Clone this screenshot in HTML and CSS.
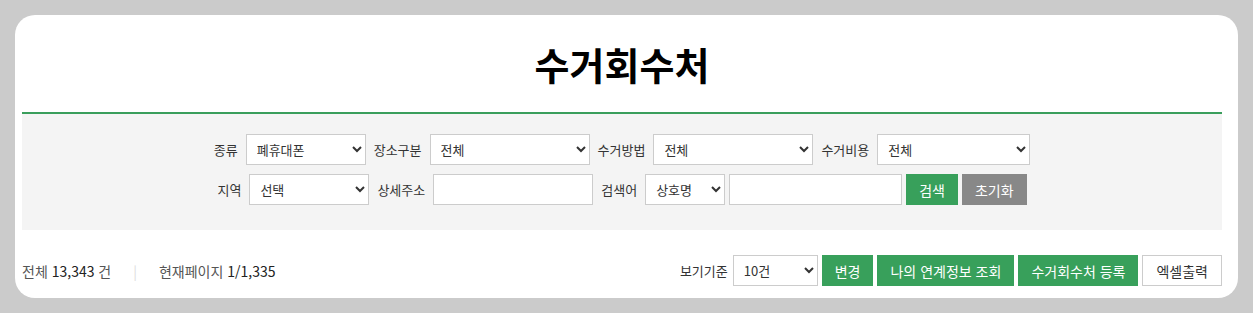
FILE: index.html
```html
<!DOCTYPE html>
<html lang="ko">
<head>
    <meta charset="UTF-8">
    <meta name="viewport" content="width=device-width, initial-scale=1.0">
    <title>수거회수처</title>
    <link rel="stylesheet" href="styles.css">
</head>
<body>
    <div class="card">
        <h1 class="page-title">수거회수처</h1>

        <!-- search filter -->
        <div class="filter">
            <div class="filter-row">
                <label>종류</label>
                <select class="w120"><option>폐휴대폰</option></select>
                <label>장소구분</label>
                <select class="w160"><option>전체</option></select>
                <label>수거방법</label>
                <select class="w160"><option>전체</option></select>
                <label>수거비용</label>
                <select class="w153"><option>전체</option></select>
            </div>
            <div class="filter-row">
                <label>지역</label>
                <select class="w120"><option>선택</option></select>
                <label>상세주소</label>
                <input type="text" class="w160">
                <label>검색어</label>
                <div class="group">
                    <select class="w80"><option>상호명</option></select>
                    <input type="text" class="w173">
                    <button class="btn green">검색</button>
                    <button class="btn gray">초기화</button>
                </div>
            </div>
        </div>

        <!-- list info -->
        <div class="list-bar">
            <div class="count">
                <span>전체 <b>13,343</b> 건</span>
                <span class="sep">|</span>
                <span>현재페이지 <b>1/1,335</b></span>
            </div>
            <div class="actions">
                <label>보기기준</label>
                <select class="w85"><option>10건</option></select>
                <button class="btn green">변경</button>
                <button class="btn green">나의 연계정보 조회</button>
                <button class="btn green">수거회수처 등록</button>
                <button class="btn white">엑셀출력</button>
            </div>
        </div>
    </div>
</body>
</html>
```

FILE: styles.css
```css
body {
    margin: 0;
    padding: 15px;
    background: #cbcbcb;
    font-family: "Noto Sans CJK KR", "Noto Sans", sans-serif;
    font-size: 13px;
    color: #333;
}
.card {
    background: #fff;
    border-radius: 20px;
    height: 283px;
    box-sizing: border-box;
    padding: 0 16px 0 7px;
}
.page-title {
    margin: 0;
    height: 97px;
    line-height: 97px;
    text-align: center;
    font-size: 38px;
    font-weight: bold;
    color: #000;
    border-bottom: 2px solid #3a9e5c;
}
.filter {
    background: #f4f4f4;
    padding: 20px 0 25px;
    display: flex;
    flex-direction: column;
    align-items: center;
    gap: 9px;
}
.filter-row {
    display: flex;
    align-items: center;
    gap: 8px;
}
.group {
    display: flex;
    align-items: center;
    gap: 4px;
}
select, input {
    height: 31px;
    box-sizing: border-box;
    border: 1px solid #cccccc;
    background: #fff;
    font-family: inherit;
    font-size: 13px;
    color: #333;
    padding: 0 6px;
    margin: 0;
    border-radius: 0;
}
.w80 { width: 80px; }
.w85 { width: 85px; }
.w120 { width: 120px; }
.w153 { width: 153px; }
.w160 { width: 160px; }
.w173 { width: 173px; }
.btn {
    height: 31px;
    border: none;
    padding: 0 13px;
    font-family: inherit;
    font-size: 14px;
    color: #fff;
    cursor: pointer;
}
.btn.green { background: #38a05b; }
.btn.gray { background: #888888; }
.btn.white {
    background: #fff;
    color: #333;
    border: 1px solid #cccccc;
}
.list-bar {
    display: flex;
    align-items: center;
    justify-content: space-between;
    margin-top: 25px;
}
.count {
    font-size: 14px;
    color: #555;
}
.count b {
    font-weight: normal;
    color: #222;
}
.sep {
    color: #ddd;
    margin: 0 18px;
}
.actions {
    display: flex;
    align-items: center;
    gap: 4px;
}
.actions label {
    margin-right: 1px;
}
```
